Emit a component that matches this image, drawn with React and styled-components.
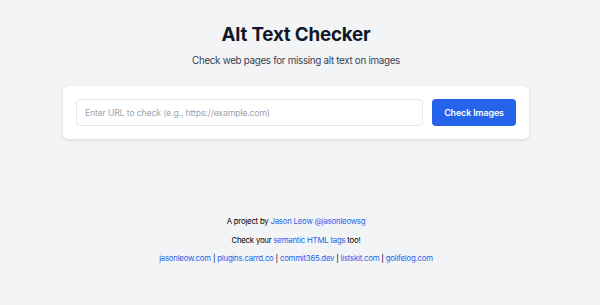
import React from 'react';
import styled, { createGlobalStyle } from 'styled-components';

const GlobalStyle = createGlobalStyle`
    body {
        margin: 0;
        background-color: #f3f4f6;
        font-family: Inter, "Noto Sans", sans-serif;
    }
`;

const Page = styled.div`
    width: calc(100% - 8px);
    padding-top: 23px;
    display: flex;
    flex-direction: column;
    align-items: center;
`;

const Title = styled.h1`
    margin: 0;
    font-size: 18.8px;
    letter-spacing: -0.2px;
    line-height: 24px;
    font-weight: 700;
    color: #111827;
`;

const Subtitle = styled.p`
    margin: 7px 0 0;
    font-size: 9.8px;
    letter-spacing: -0.3px;
    line-height: 14px;
    color: #374151;
`;

const Card = styled.form`
    margin-top: 18px;
    width: 466px;
    box-sizing: border-box;
    padding: 13px;
    background-color: #ffffff;
    border-radius: 6px;
    box-shadow: 0 1px 3px rgba(0, 0, 0, 0.08), 0 2px 6px rgba(0, 0, 0, 0.04);
    display: flex;
    gap: 9px;
`;

const UrlInput = styled.input`
    flex: 1;
    height: 27px;
    box-sizing: border-box;
    border: 1px solid #e5e7eb;
    border-radius: 4px;
    padding: 0 8px;
    font-family: inherit;
    font-size: 8.7px;
    letter-spacing: -0.15px;
    color: #111827;
    outline: none;

    &::placeholder {
        color: #9ca3af;
    }
`;

const CheckButton = styled.button`
    width: 84px;
    height: 27px;
    border: none;
    border-radius: 4px;
    background-color: #2563eb;
    color: #ffffff;
    font-family: inherit;
    font-size: 8.9px;
    letter-spacing: -0.1px;
    font-weight: 600;
    cursor: pointer;
`;

const Footer = styled.footer`
    margin-top: 76px;
    display: flex;
    flex-direction: column;
    align-items: center;
    gap: 6.5px;
`;

const FooterLine = styled.p`
    margin: 0;
    font-size: 7.8px;
    letter-spacing: -0.22px;
    line-height: 12px;
    color: #000000;
`;

const Link = styled.a`
    color: #2563eb;
    text-decoration: none;
`;

const sites = ['jasonleow.com', 'plugins.carrd.co', 'commit365.dev', 'listskit.com', 'golifelog.com'];

const App = () => {
    return (
        <>
            <GlobalStyle />
            <Page>
                <Title>Alt Text Checker</Title>
                <Subtitle>Check web pages for missing alt text on images</Subtitle>
                <Card onSubmit={e => e.preventDefault()}>
                    <UrlInput type="url" placeholder="Enter URL to check (e.g., https://example.com)" />
                    <CheckButton type="submit">Check Images</CheckButton>
                </Card>
                <Footer>
                    <FooterLine>
                        A project by <Link href="#">Jason Leow @jasonleowsg</Link>
                    </FooterLine>
                    <FooterLine>
                        Check your <Link href="#">semantic HTML tags</Link> too!
                    </FooterLine>
                    <FooterLine>
                        {sites.map((site, index) => (
                            <React.Fragment key={site}>
                                {index > 0 && ' | '}
                                <Link href="#">{site}</Link>
                            </React.Fragment>
                        ))}
                    </FooterLine>
                </Footer>
            </Page>
        </>
    );
};

export default App;
